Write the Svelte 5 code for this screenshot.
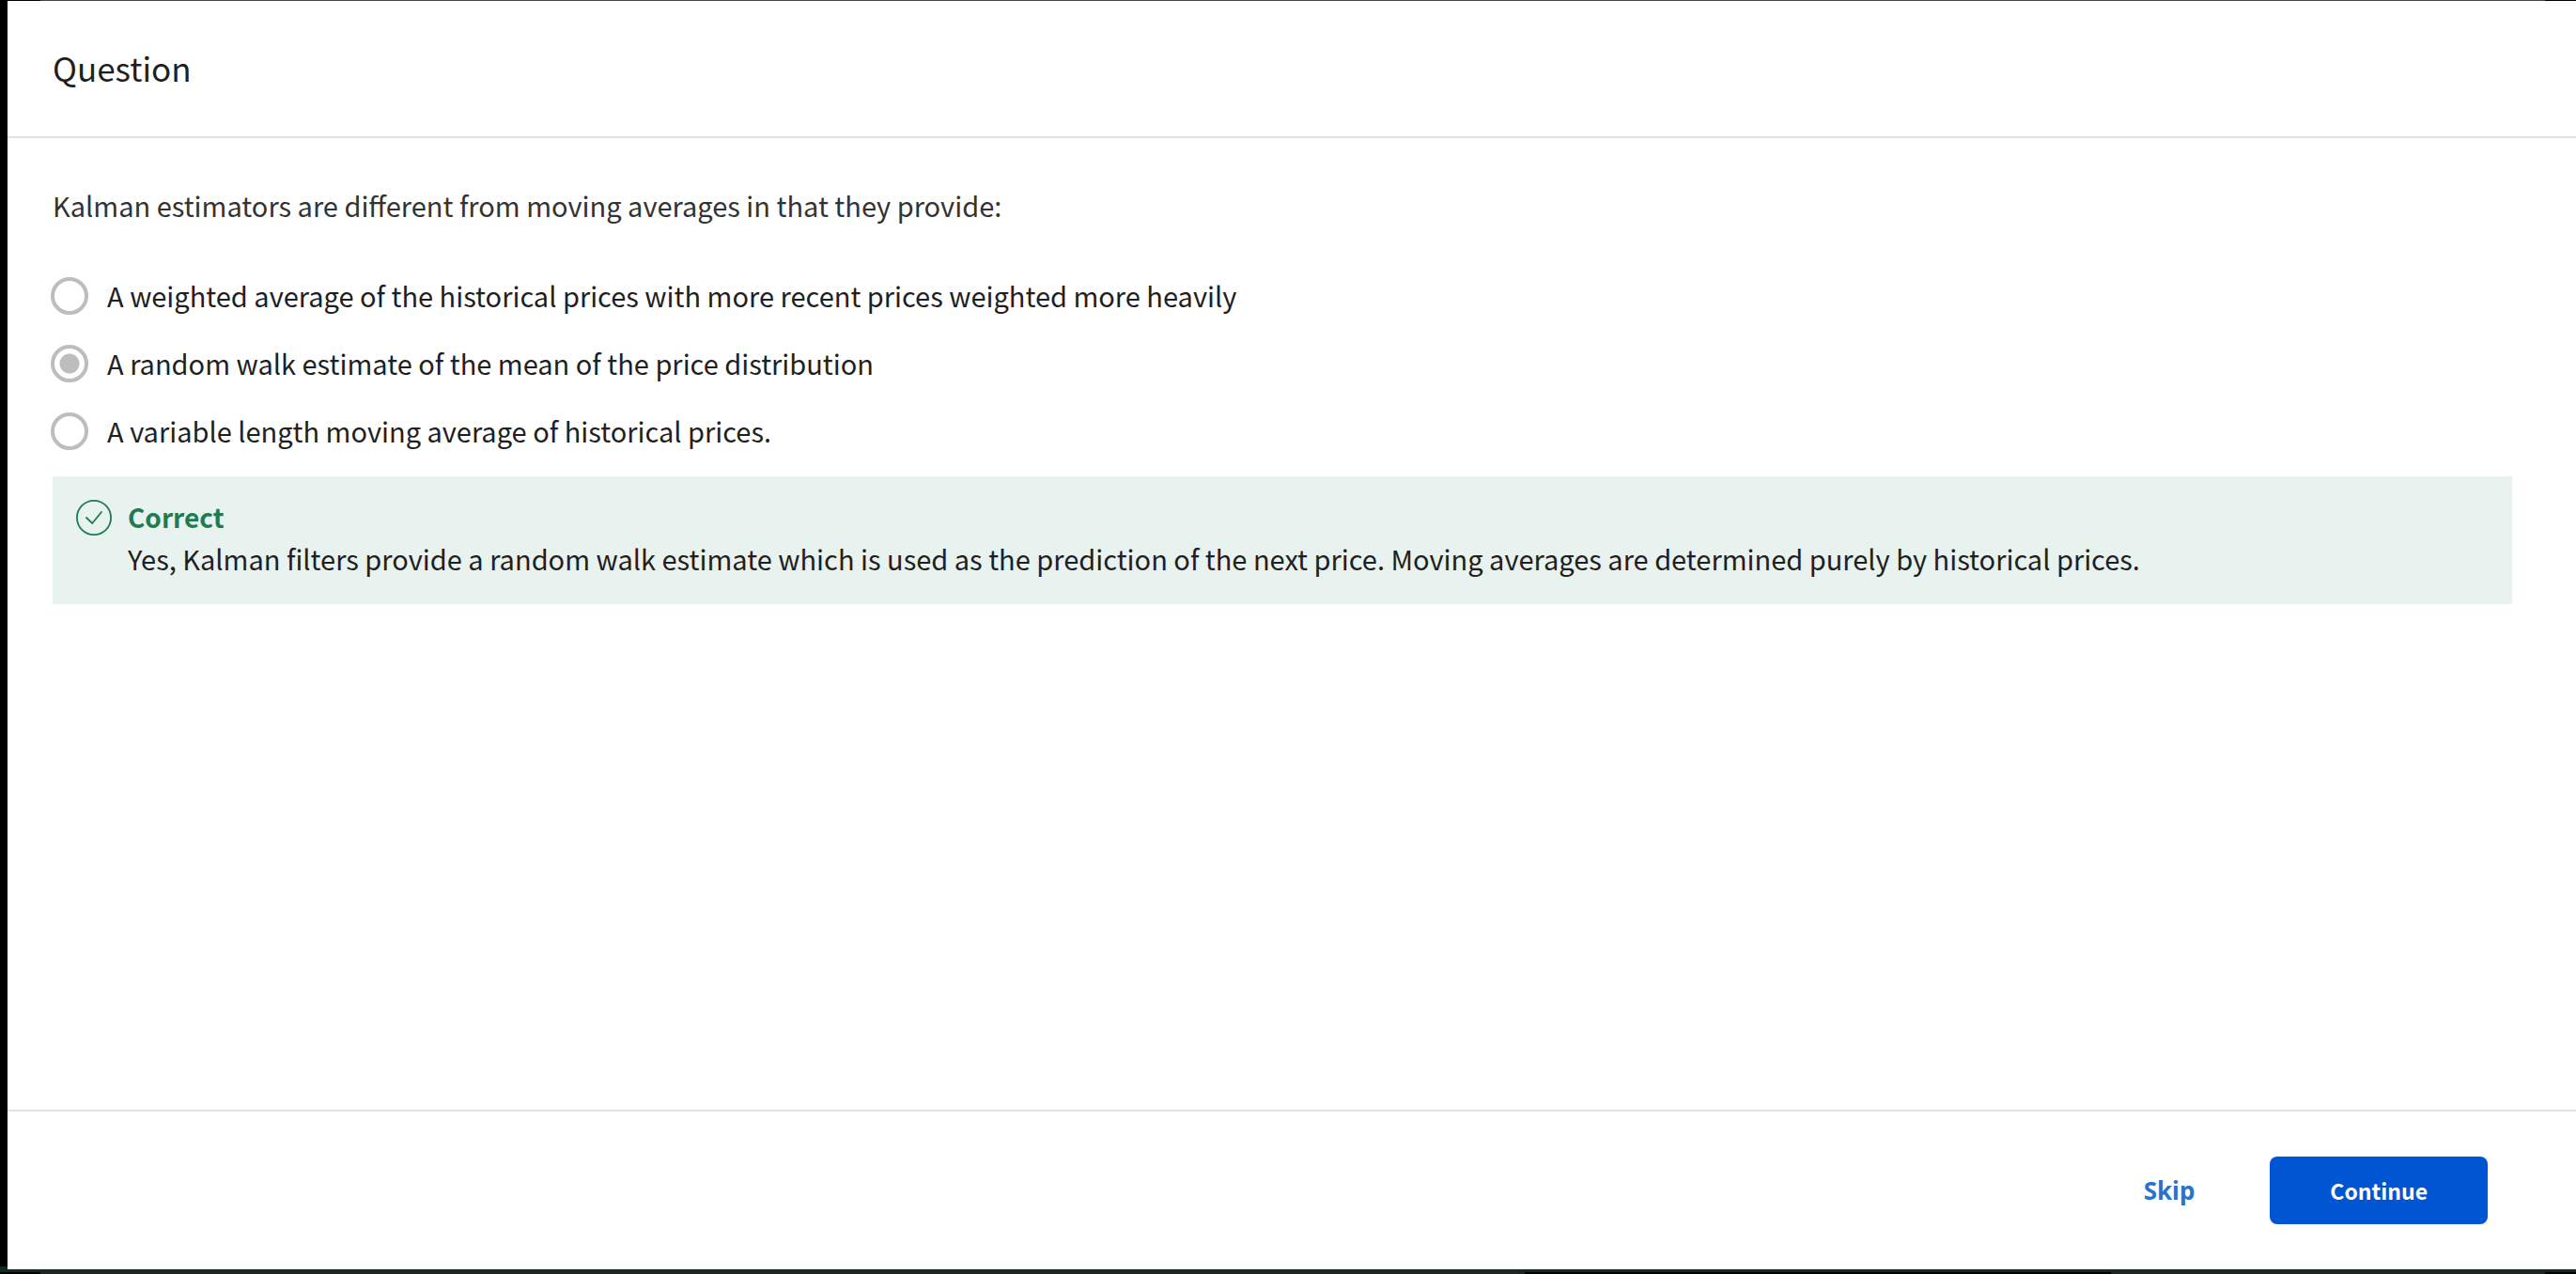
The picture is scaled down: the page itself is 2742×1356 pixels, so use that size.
<script>
  const options = [
    'A weighted average of the historical prices with more recent prices weighted more heavily',
    'A random walk estimate of the mean of the price distribution',
    'A variable length moving average of historical prices.'
  ];
  let selected = $state(1);
</script>

<div class="backdrop">
  <div class="dialog">
    <header><h1>Question</h1></header>
    <main>
      <fieldset>
        <legend>Kalman estimators are different from moving averages in that they provide:</legend>
        {#each options as option, i}
          <label>
            <input type="radio" name="answer" value={i} bind:group={selected} />
            <span>{option}</span>
          </label>
        {/each}
      </fieldset>
      <section class="feedback">
        <svg viewBox="0 0 38 38" aria-hidden="true">
          <circle cx="19" cy="19" r="18.1" />
          <path d="M11 19l6.2 6L27 13" />
        </svg>
        <div>
          <h2>Correct</h2>
          <p>Yes, Kalman filters provide a random walk estimate which is used as the prediction of the next price. Moving averages are determined purely by historical prices.</p>
        </div>
      </section>
    </main>
    <footer>
      <button class="skip" type="button">Skip</button>
      <button class="continue" type="button">Continue</button>
    </footer>
  </div>
  <div class="strip"></div>
</div>

<style>
  :global(body) { margin: 0; }
  .backdrop {
    box-sizing: border-box;
    min-height: 100vh;
    padding-top: 1px;
    display: flex;
    flex-direction: column;
    background:
      linear-gradient(#444, #444) 43px 0 / calc(100% - 76px) 1px no-repeat,
      linear-gradient(#112b1f, #112b1f) 0 100% / 8px 8px no-repeat,
      #000;
    font-family: "Noto Sans CJK SC", "Noto Sans", sans-serif;
    font-size: 29px;
    line-height: 44px;
    color: #1f1f1f;
  }
  .dialog {
    flex: 1;
    margin-left: 8px;
    display: flex;
    flex-direction: column;
    background: #fff;
  }
  header {
    padding: 47px 48px 49px;
    border-bottom: 2px solid #e1e1e1;
  }
  h1 { margin: 0; font-size: 35px; line-height: 48px; font-weight: 400; }
  main { flex: 1; padding: 47px 68px 48px 48px; }
  fieldset { margin: 0; padding: 0; border: 0; min-width: 0; }
  legend { padding: 0 0 37px; line-height: 48px; color: #333; }
  label { display: flex; align-items: center; gap: 20px; height: 72px; }
  label span { padding-bottom: 2px; }
  input {
    appearance: none;
    box-sizing: border-box;
    flex: none;
    width: 40px;
    height: 40px;
    margin: 0 0 0 -2px;
    border: 4px solid #bdbdbd;
    border-radius: 50%;
  }
  input:checked { background: radial-gradient(circle, #bdbdbd 10px, #fff 11px); }
  .feedback {
    display: flex;
    gap: 17px;
    margin-top: 12px;
    padding: 21px 25px 27px;
    background: #e8f2ee;
  }
  svg {
    flex: none;
    width: 38px;
    height: 38px;
    margin-top: 4px;
    fill: none;
    stroke: #1d7c50;
    stroke-width: 1.8;
    stroke-linecap: round;
  }
  h2 { margin: 0; font-size: 28px; line-height: 44px; font-weight: 600; color: #1d7c50; }
  p { margin: 0; }
  footer {
    display: flex;
    justify-content: flex-end;
    align-items: center;
    gap: 24px;
    padding: 48px 94px 48px 48px;
    border-top: 2px solid #e1e1e1;
  }
  button { border: 0; height: 72px; cursor: pointer; }
  .skip {
    padding: 0 56px;
    background: none;
    color: #2a73cc;
    font: 700 26px "Noto Sans", sans-serif;
  }
  .continue {
    padding: 0 64px;
    border-radius: 8px;
    background: #0056d2;
    color: #fff;
    font: 600 23px "Noto Sans CJK SC", sans-serif;
  }
  .strip {
    height: 2px;
    border-top: 3px solid #112b1f;
    background:
      linear-gradient(#222, #222) 43px 0 / 1580px 100% no-repeat,
      linear-gradient(#222, #222) calc(100% - 33px) 0 / 462px 100% no-repeat,
      #000;
  }
</style>
